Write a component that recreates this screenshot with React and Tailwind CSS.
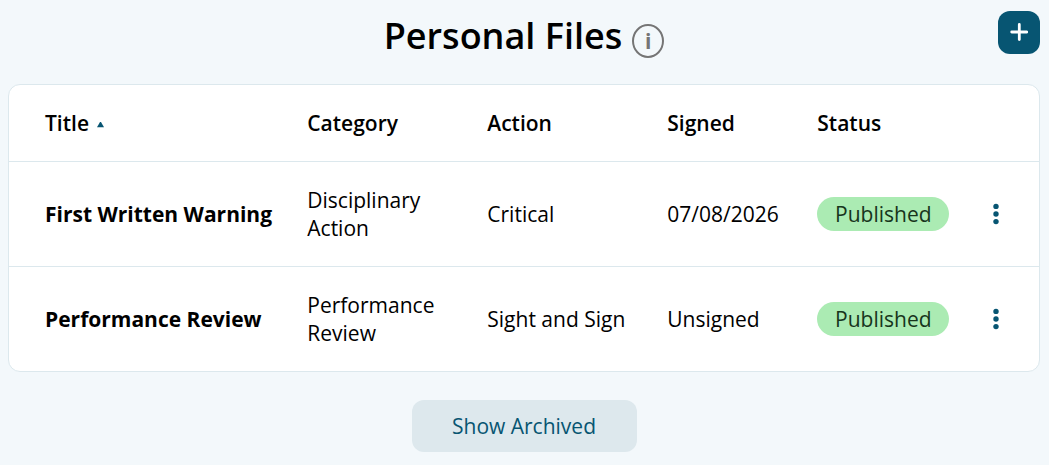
const COLUMNS = ["Category", "Action", "Signed", "Status"];

const FILES = [
  { id: 1, title: "First Written Warning", category: "Disciplinary Action", action: "Critical", signed: "07/08/2026", status: "Published" },
  { id: 2, title: "Performance Review", category: "Performance Review", action: "Sight and Sign", signed: "Unsigned", status: "Published" },
];

const GRID = "grid grid-cols-[262.3px_180px_180px_150px_minmax(0,1fr)] items-center pl-9";

function Header() {
  return (
    <header className="grid grid-cols-[1fr_auto_1fr] items-start">
      <div />
      <div className="flex items-center gap-2.5 pt-2.5">
        <h1 className="text-[36px] leading-[52px] font-semibold">Personal Files</h1>
        <span className="mt-2.5 flex h-[34px] w-8 shrink-0 items-center justify-center rounded-[50%] border-2 border-[#757575] text-[21px] leading-none font-bold text-[#757575]">
          i
        </span>
      </div>
      <button aria-label="Add file" className="mt-[11px] flex h-[43px] w-[42px] items-center justify-center justify-self-end rounded-xl bg-[#075572] pb-px">
        <svg width="18" height="18" viewBox="0 0 18 18" stroke="#fff" strokeWidth="2.8" strokeLinecap="round">
          <path d="M9.3 1.5v15M1.7 9h15" />
        </svg>
      </button>
    </header>
  );
}

function FileRow({ file }) {
  return (
    <div className={`${GRID} h-[105px] border-t border-[#dce8ed]`}>
      <div className="font-bold whitespace-nowrap">{file.title}</div>
      <div className="w-[140px]">{file.category}</div>
      <div>{file.action}</div>
      <div>{file.signed}</div>
      <div className="flex items-center justify-between pr-10">
        <span className="flex h-[34px] w-[132px] items-center justify-center rounded-full bg-[#abebb3] text-[#17351c]">{file.status}</span>
        <button aria-label="More actions">
          <svg width="6" height="22" viewBox="0 0 6 22" fill="#075572">
            <circle cx="3" cy="3.4" r="2.7" />
            <circle cx="3" cy="11" r="2.7" />
            <circle cx="3" cy="18.6" r="2.7" />
          </svg>
        </button>
      </div>
    </div>
  );
}

function App() {
  return (
    <main className="flex h-[465px] flex-col bg-[#f3f8fb] px-2 pr-[9px] font-['Open_Sans',sans-serif] text-[21px] leading-7 text-black">
      <Header />
      <section className="mt-[22px] rounded-xl border border-[#dce8ed] bg-white">
        <div className={`${GRID} h-[76px] font-semibold`}>
          <div className="flex items-center gap-2">
            Title
            <svg width="7" height="6" viewBox="0 0 7 6" fill="#075572" className="mt-1">
              <path d="M3 0h1L7 5.3H0z" />
            </svg>
          </div>
          {COLUMNS.map((name) => (
            <div key={name}>{name}</div>
          ))}
        </div>
        {FILES.map((file) => (
          <FileRow key={file.id} file={file} />
        ))}
      </section>
      <button className="mt-7 flex h-[52px] w-[225px] items-center justify-center self-center rounded-xl bg-[#dde8ed] text-[#075572]">
        Show Archived
      </button>
    </main>
  );
}

export default App;
